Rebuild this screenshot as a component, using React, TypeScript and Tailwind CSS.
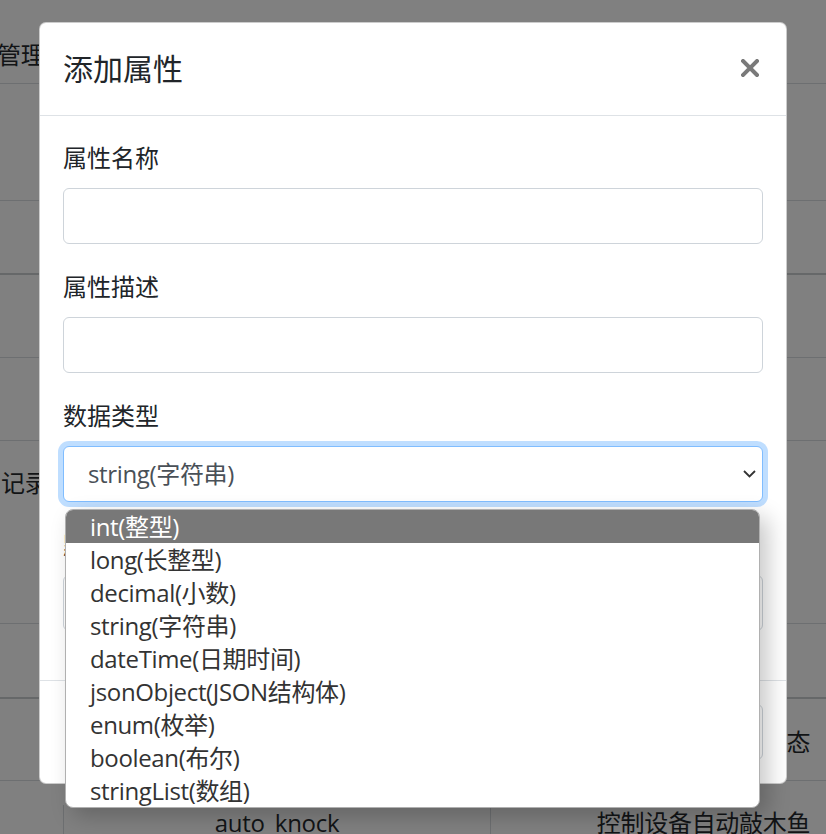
import React from "react";

const options = [
  "int(整型)",
  "long(长整型)",
  "decimal(小数)",
  "string(字符串)",
  "dateTime(日期时间)",
  "jsonObject(JSON结构体)",
  "enum(枚举)",
  "boolean(布尔)",
  "stringList(数组)",
];

function Row({
  className,
  first,
  second,
  third,
}: {
  className: string;
  first?: React.ReactNode;
  second?: React.ReactNode;
  third?: React.ReactNode;
}) {
  return (
    <div className={`flex shrink-0 border-[#6d6f71] ${className}`}>
      <div className="w-[63px] shrink-0 whitespace-nowrap">{first}</div>
      <div className="w-[427px] shrink-0 border-l border-[#6d6f71] text-center whitespace-nowrap">{second}</div>
      <div className="w-[426px] shrink-0 border-l border-[#6d6f71] text-center whitespace-nowrap">{third}</div>
    </div>
  );
}

function Field({ label, children }: { label: string; children: React.ReactNode }) {
  return (
    <div className="mb-[25px]">
      <label className="mb-3 block text-[24px] leading-[36px] text-[#212529]">{label}</label>
      {children}
    </div>
  );
}

export default function App() {
  return (
    <div className="relative h-[834px] w-[826px] overflow-hidden bg-[#808080] font-['Open_Sans','Noto_Sans_CJK_SC',sans-serif] text-[24px] leading-[36px] text-[#121416]">
      {/* table behind the backdrop */}
      <div className="flex flex-col tracking-[-0.3px]">
        <Row className="h-[84px] border-b pt-[37px]" first={<span className="-ml-[3px] block">管理</span>} />
        <Row className="h-[117px] border-b" />
        <Row className="h-[74px] border-b-2 border-[#666869]" />
        <Row className="h-[83px] border-b" />
        <Row className="h-[83px] border-b" />
        <Row className="h-[183px] border-b pt-[24px]" first={<span className="ml-px">记录</span>} />
        <Row className="h-[75px] border-b-2 border-[#666869]" />
        <Row className="h-[82px] border-b pt-[25px]" third="获取设备的运行状态" />
        <Row className="h-[60px] pt-[24px]" second="auto_knock" third="控制设备自动敲木鱼" />
      </div>

      {/* modal */}
      <div className="absolute left-[39px] top-[22px] flex h-[762px] w-[748px] flex-col rounded-[7px] border border-black/20 bg-white">
        <div className="flex items-start justify-between border-b border-[#dee2e6] px-[23px] pt-[23px] pb-6">
          <h5 className="text-[30px] leading-[45px] text-[#212529]">添加属性</h5>
          <button className="mr-[4px] mt-[13px] text-[#7a7a7a]">
            <svg width="18" height="18" viewBox="0 0 18 18">
              <path d="M2 2 L16 16 M16 2 L2 16" stroke="currentColor" strokeWidth="4" strokeLinecap="square" />
            </svg>
          </button>
        </div>

        <div className="px-[23px] pt-6 pb-6">
          <Field label="属性名称">
            <div className="h-[56px] rounded-[6px] border border-[#ced4da] bg-white" />
          </Field>
          <Field label="属性描述">
            <div className="h-[56px] rounded-[6px] border border-[#ced4da] bg-white" />
          </Field>
          <Field label="数据类型">
            <div className="relative">
              <div className="flex h-[56px] items-center justify-between rounded-[6px] border border-[#80bdff] bg-white pl-[24px] pr-[6px] text-[#495057] shadow-[0_0_0_5px_rgba(0,123,255,0.25)]">
                <span className="tracking-[-0.35px]">string(字符串)</span>
                <svg width="13" height="8" viewBox="0 0 13 8" className="text-[#333]">
                  <path d="M1 1 L6.5 6.5 L12 1" fill="none" stroke="currentColor" strokeWidth="1.8" />
                </svg>
              </div>

              {/* open native list */}
              <ul className="absolute left-[2px] top-[63px] z-10 w-[695px] overflow-hidden rounded-[8px] border border-[#b0b0b0] bg-white text-[#333] tracking-[-0.35px] shadow-[8px_8px_22px_rgba(0,0,0,0.22)]">
                {options.map((o, i) => (
                  <li
                    key={o}
                    className={`h-[33px] pl-[24px] leading-[33px] ${i === 0 ? "bg-[#787878] text-white" : ""}`}
                  >
                    {o}
                  </li>
                ))}
              </ul>
            </div>
          </Field>
          <Field label="默认值">
            <div className="h-[56px] rounded-[6px] border border-[#ced4da] bg-white" />
          </Field>
        </div>

        <div className="flex flex-1 items-center justify-end gap-3 border-t border-[#dee2e6] px-[23px]">
          <button className="h-[56px] rounded-[6px] border border-[#ced4da] bg-white px-[18px] text-[#212529]">取消</button>
          <button className="h-[56px] rounded-[6px] border border-[#ced4da] bg-white px-[18px] text-[#212529]">确定</button>
        </div>
      </div>
    </div>
  );
}
